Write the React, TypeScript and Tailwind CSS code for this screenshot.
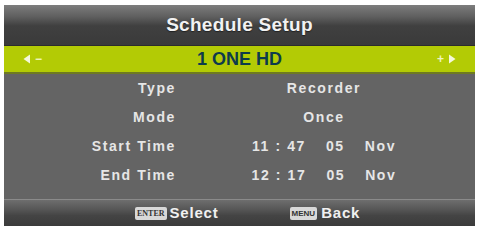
export default function App() {
  const rows = [
    { label: "Type", value: ["Recorder"] },
    { label: "Mode", value: ["Once"] },
    { label: "Start Time", value: ["11 : 47", "05", "Nov"] },
    { label: "End Time", value: ["12 : 17", "05", "Nov"] },
  ]

  return (
    <div className="h-[226px] w-[479px] bg-white pl-[4px] pr-[4px] pt-[5px] font-['Liberation_Sans',Arial,sans-serif]">
      <div className="flex h-[221px] w-[471px] flex-col overflow-hidden">
        {/* title */}
        <div className="flex h-[41px] items-center justify-center border-b border-[#2c2c2c] bg-[linear-gradient(180deg,#7d7d7d_0%,#5e5e5e_30%,#404040_52%,#3a3a3a_100%)]">
          <span className="text-[19px] font-bold tracking-[0.3px] text-[#f2f2f2] [text-shadow:0_1px_1px_#222]">
            Schedule Setup
          </span>
        </div>

        {/* channel bar */}
        <div className="flex h-[28px] items-center border-b-2 border-[#6f7a22] bg-[#b3cb05] px-[19px]">
          <div className="flex w-[60px] items-center gap-[4px] text-[#eef5c0]">
            <svg width="8" height="10" viewBox="0 0 8 10">
              <path d="M7 0.5 L0.5 5 L7 9.5 Z" fill="#f4f8dc" />
            </svg>
            <span className="text-[12px] font-bold leading-none">−</span>
          </div>
          <div className="flex-1 text-center text-[18px] font-bold text-[#0d3b4c]">1 ONE HD</div>
          <div className="flex w-[60px] items-center justify-end gap-[4px] text-[#eef5c0]">
            <span className="text-[12px] font-bold leading-none">+</span>
            <svg width="8" height="10" viewBox="0 0 8 10">
              <path d="M1 0.5 L7.5 5 L1 9.5 Z" fill="#f4f8dc" />
            </svg>
          </div>
        </div>

        {/* rows */}
        <div className="flex flex-1 flex-col bg-[#646464]">
          {rows.map((r) => (
            <div key={r.label} className="flex h-[29px] items-center text-[14px] font-bold tracking-[1.6px] text-[#e6e6e6]">
              <div className="w-[172px] text-right">{r.label}</div>
              <div className="ml-[70px] flex w-[156px] justify-center gap-[20px] whitespace-pre">
                {r.value.map((v) => (
                  <span key={v}>{v}</span>
                ))}
              </div>
            </div>
          ))}
        </div>

        {/* footer */}
        <div className="flex h-[27px] items-center border-t border-[#8a8a8a] bg-[linear-gradient(180deg,#6e6e6e_0%,#575757_35%,#444444_60%,#3b3b3b_100%)] pl-[131px]">
          <span className="rounded-[2px] bg-[#d8d8d8] px-[2px] text-[8px] font-bold leading-[13px] text-[#333] [font-family:'Liberation_Serif',serif]">
            ENTER
          </span>
          <span className="ml-[3px] text-[15px] font-bold tracking-[0.8px] text-[#f0f0f0]">Select</span>
          <span className="ml-[71px] rounded-[2px] bg-[#d8d8d8] px-[2px] text-[8px] font-bold leading-[13px] text-[#333]">
            MENU
          </span>
          <span className="ml-[4px] text-[15px] font-bold tracking-[0.8px] text-[#f0f0f0]">Back</span>
        </div>
      </div>
    </div>
  )
}
